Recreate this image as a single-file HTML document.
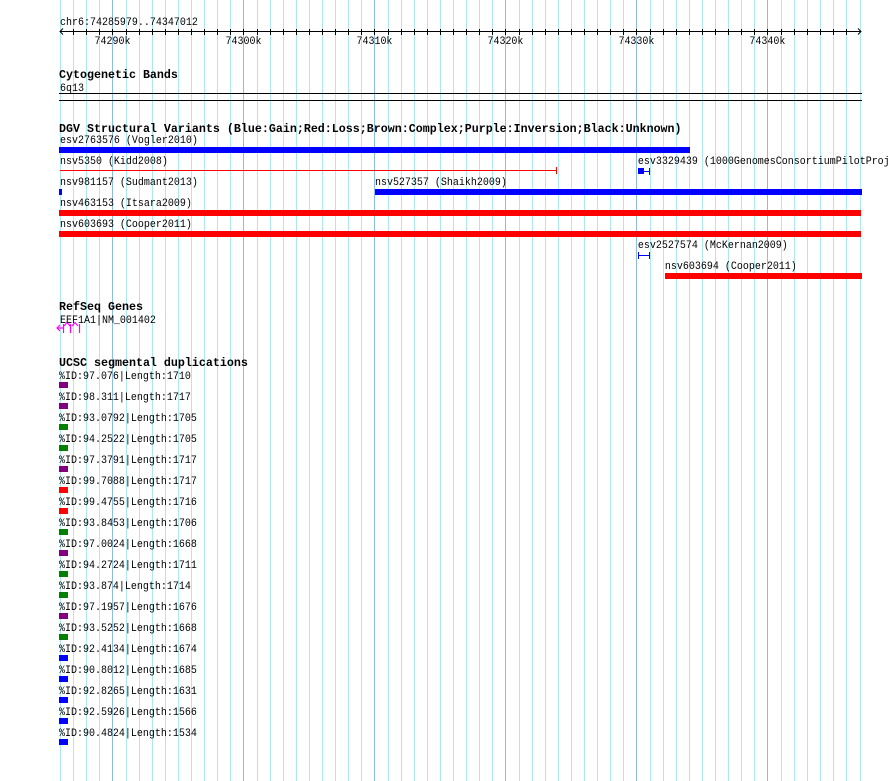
<!DOCTYPE html>
<html><head><meta charset="utf-8"><style>
html,body{margin:0;padding:0;background:#fff;width:890px;height:781px;overflow:hidden}
svg{display:block}
text{font-family:"Liberation Mono",monospace;font-size:11px;fill:#000}
.b{font-weight:bold;font-size:11.67px}
</style></head><body>
<svg width="890" height="781" xmlns="http://www.w3.org/2000/svg">
<path stroke="#aee9f1" stroke-width="1" fill="none" d="M60.5 0V781M73.5 0V781M86.5 0V781M99.5 0V781M126.5 0V781M139.5 0V781M152.5 0V781M165.5 0V781M178.5 0V781M191.5 0V781M204.5 0V781M217.5 0V781M230.5 0V781M257.5 0V781M270.5 0V781M283.5 0V781M296.5 0V781M309.5 0V781M322.5 0V781M335.5 0V781M348.5 0V781M361.5 0V781M388.5 0V781M401.5 0V781M414.5 0V781M427.5 0V781M440.5 0V781M453.5 0V781M466.5 0V781M479.5 0V781M492.5 0V781M519.5 0V781M532.5 0V781M545.5 0V781M558.5 0V781M571.5 0V781M584.5 0V781M597.5 0V781M610.5 0V781M623.5 0V781M650.5 0V781M663.5 0V781M676.5 0V781M689.5 0V781M702.5 0V781M715.5 0V781M728.5 0V781M741.5 0V781M754.5 0V781M781.5 0V781M794.5 0V781M807.5 0V781M820.5 0V781M833.5 0V781M846.5 0V781M860.5 0V781"/>
<path stroke="#8cbde6" stroke-width="1" fill="none" d="M112.5 0V781M243.5 0V781M374.5 0V781M505.5 0V781M636.5 0V781M767.5 0V781"/>

<path stroke="#000" fill="none" d="M60 31.5H861M63 28.5L60 31.5L63 34.5M858 28.5L861 31.5L858 34.5M73.5 29V35M86.5 29V35M99.5 29V35M112.5 29V35M126.5 29V35M139.5 29V35M152.5 29V35M165.5 29V35M178.5 29V35M191.5 29V35M204.5 29V35M217.5 29V35M230.5 29V35M243.5 29V35M257.5 29V35M270.5 29V35M283.5 29V35M296.5 29V35M309.5 29V35M322.5 29V35M335.5 29V35M348.5 29V35M361.5 29V35M374.5 29V35M388.5 29V35M401.5 29V35M414.5 29V35M427.5 29V35M440.5 29V35M453.5 29V35M466.5 29V35M479.5 29V35M492.5 29V35M505.5 29V35M519.5 29V35M532.5 29V35M545.5 29V35M558.5 29V35M571.5 29V35M584.5 29V35M597.5 29V35M610.5 29V35M623.5 29V35M636.5 29V35M650.5 29V35M663.5 29V35M676.5 29V35M689.5 29V35M702.5 29V35M715.5 29V35M728.5 29V35M741.5 29V35M754.5 29V35M767.5 29V35M781.5 29V35M794.5 29V35M807.5 29V35M820.5 29V35M833.5 29V35M846.5 29V35"/>

<text class="b" x="59" y="78">Cytogenetic Bands</text>
<path stroke="#000" d="M59 93.5H862M59 100.5H862"/>
<text class="b" x="59" y="132">DGV Structural Variants (Blue:Gain;Red:Loss;Brown:Complex;Purple:Inversion;Black:Unknown)</text>
<text class="b" x="59" y="310">RefSeq Genes</text>
<text class="b" x="59" y="366">UCSC segmental duplications</text>

<rect x="59" y="147" width="631" height="6" fill="#0000ff"/>
<path stroke="#ff0000" d="M60 170.5H557M556.5 167V174"/>
<rect x="638" y="168" width="6" height="6" fill="#0000ff"/>
<path stroke="#0000ff" d="M644 171.5H649M649.5 168V175"/>
<rect x="59" y="189" width="3" height="6" fill="#0000ff"/>
<rect x="375" y="189" width="487" height="6" fill="#0000ff"/>
<rect x="59" y="210" width="802" height="6" fill="#ff0000"/>
<rect x="59" y="231" width="802" height="6" fill="#ff0000"/>
<path stroke="#0000ff" d="M638.5 252V259M638 255.5H649M649.5 252V259"/>
<rect x="665" y="273" width="197" height="6" fill="#ff0000"/>
<g stroke="#ff00ff" fill="none" stroke-width="1.2">
<path d="M60 325L57 328L60 331M57 328H63M63.5 324V333M64 326L67 322.5L70 326M70.5 324V333M72 326L75 322.5L78 326M79.5 324V333"/>
</g>
<rect x="59" y="382" width="9" height="6" fill="#800080"/>
<rect x="59" y="403" width="9" height="6" fill="#800080"/>
<rect x="59" y="424" width="9" height="6" fill="#008000"/>
<rect x="59" y="445" width="9" height="6" fill="#008000"/>
<rect x="59" y="466" width="9" height="6" fill="#800080"/>
<rect x="59" y="487" width="9" height="6" fill="#ff0000"/>
<rect x="59" y="508" width="9" height="6" fill="#ff0000"/>
<rect x="59" y="529" width="9" height="6" fill="#008000"/>
<rect x="59" y="550" width="9" height="6" fill="#800080"/>
<rect x="59" y="571" width="9" height="6" fill="#008000"/>
<rect x="59" y="592" width="9" height="6" fill="#008000"/>
<rect x="59" y="613" width="9" height="6" fill="#800080"/>
<rect x="59" y="634" width="9" height="6" fill="#008000"/>
<rect x="59" y="655" width="9" height="6" fill="#0000ff"/>
<rect x="59" y="676" width="9" height="6" fill="#0000ff"/>
<rect x="59" y="697" width="9" height="6" fill="#0000ff"/>
<rect x="59" y="718" width="9" height="6" fill="#0000ff"/>
<rect x="59" y="739" width="9" height="6" fill="#0000ff"/>

<g transform="scale(0.909,1)">
<text x="66" y="25">chr6:74285979..74347012</text>
<text x="123.75" y="44" text-anchor="middle">74290k</text>
<text x="267.85" y="44" text-anchor="middle">74300k</text>
<text x="411.95" y="44" text-anchor="middle">74310k</text>
<text x="556.05" y="44" text-anchor="middle">74320k</text>
<text x="700.15" y="44" text-anchor="middle">74330k</text>
<text x="844.25" y="44" text-anchor="middle">74340k</text>
<text x="66" y="91">6q13</text>
<text x="66" y="143">esv2763576 (Vogler2010)</text>
<text x="66" y="164">nsv5350 (Kidd2008)</text>
<text x="701.8" y="164">esv3329439 (1000GenomesConsortiumPilotProj</text>
<text x="66" y="185">nsv981157 (Sudmant2013)</text>
<text x="412.5" y="185">nsv527357 (Shaikh2009)</text>
<text x="66" y="206">nsv463153 (Itsara2009)</text>
<text x="66" y="227">nsv603693 (Cooper2011)</text>
<text x="701.8" y="248">esv2527574 (McKernan2009)</text>
<text x="731.5" y="269">nsv603694 (Cooper2011)</text>
<text x="66" y="323">EEF1A1|NM_001402</text>
<text x="64.9" y="379">%ID:97.076|Length:1710</text>
<text x="64.9" y="400">%ID:98.311|Length:1717</text>
<text x="64.9" y="421">%ID:93.0792|Length:1705</text>
<text x="64.9" y="442">%ID:94.2522|Length:1705</text>
<text x="64.9" y="463">%ID:97.3791|Length:1717</text>
<text x="64.9" y="484">%ID:99.7088|Length:1717</text>
<text x="64.9" y="505">%ID:99.4755|Length:1716</text>
<text x="64.9" y="526">%ID:93.8453|Length:1706</text>
<text x="64.9" y="547">%ID:97.0024|Length:1668</text>
<text x="64.9" y="568">%ID:94.2724|Length:1711</text>
<text x="64.9" y="589">%ID:93.874|Length:1714</text>
<text x="64.9" y="610">%ID:97.1957|Length:1676</text>
<text x="64.9" y="631">%ID:93.5252|Length:1668</text>
<text x="64.9" y="652">%ID:92.4134|Length:1674</text>
<text x="64.9" y="673">%ID:90.8012|Length:1685</text>
<text x="64.9" y="694">%ID:92.8265|Length:1631</text>
<text x="64.9" y="715">%ID:92.5926|Length:1566</text>
<text x="64.9" y="736">%ID:90.4824|Length:1534</text>
</g>
</svg>
</body></html>
